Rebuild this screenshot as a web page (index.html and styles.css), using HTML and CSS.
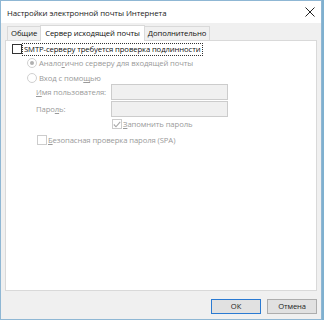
FILE: index.html
```html
<!DOCTYPE html>
<html>
<head>
<meta charset="utf-8">
<link rel="stylesheet" href="styles.css">
</head>
<body>
<div class="window">
  <div class="titlebar">
    <span class="title">Настройки электронной почты Интернета</span>
    <svg class="close" width="10" height="10" viewBox="0 0 10 10"><path d="M0.5 0.5L9.5 9.5M9.5 0.5L0.5 9.5" stroke="#222" stroke-width="1"/></svg>
  </div>
  <div class="body">
    <div class="tabs">
      <div class="tab">Общие</div>
      <div class="tab active">Сервер исходящей почты</div>
      <div class="tab">Дополнительно</div>
    </div>
    <div class="panel">
      <div class="row main-check">
        <span class="box"></span>
        <span class="focus">SMTP-серверу требуется проверка подлинности</span>
      </div>
      <div class="row radio-row dis">
        <span class="radio checked"></span>
        <span>Анало<u>г</u>ично серверу для входящей почты</span>
      </div>
      <div class="row radio-row last dis">
        <span class="radio"></span>
        <span>Вход с помо<u>щ</u>ью</span>
      </div>
      <div class="field dis">
        <span class="flabel"><u>И</u>мя пользователя:</span>
        <span class="input"></span>
      </div>
      <div class="field dis">
        <span class="flabel">Паро<u>л</u>ь:</span>
        <span class="input"></span>
      </div>
      <div class="row remember dis">
        <span class="box small">
          <svg width="8" height="7" viewBox="0 0 8 7"><path d="M0.8 3.5L3 5.8L7.2 0.8" stroke="#a8a8a8" stroke-width="1.1" fill="none"/></svg>
        </span>
        <span><u>З</u>апомнить пароль</span>
      </div>
      <div class="row spa dis">
        <span class="box small"></span>
        <span><u>Б</u>езопасная проверка пароля (SPA)</span>
      </div>
    </div>
    <div class="buttons">
      <div class="btn default">ОК</div>
      <div class="btn">Отмена</div>
    </div>
  </div>
</div>
</body>
</html>
```

FILE: styles.css
```css
html, body {
  margin: 0;
  padding: 0;
}
body {
  width: 324px;
  height: 320px;
  background: #7fb0cf;
  font-family: "Open Sans", "Noto Sans", sans-serif;
  font-size: 7.7px;
  letter-spacing: -0.1px;
  color: #111;
  overflow: hidden;
}
.window {
  width: 320px;
  height: 318px;
  border: 1px solid #8fb7d4;
  background: #f0f0f0;
  display: flex;
  flex-direction: column;
}
.titlebar {
  height: 22px;
  background: #ffffff;
  display: flex;
  align-items: center;
  justify-content: space-between;
  padding: 0 6px 0 6px;
  flex-shrink: 0;
}
.title {
  font-size: 7.9px;
  color: #1a1a1a;
  margin-top: 2px;
}
.close {
  margin-top: -1px;
}
.body {
  flex: 1;
  display: flex;
  flex-direction: column;
  padding: 2px 4px 0 4px;
}
.tabs {
  display: flex;
  align-items: flex-end;
  height: 15px;
  position: relative;
  z-index: 1;
  padding-left: 2px;
}
.tab {
  height: 13px;
  line-height: 13px;
  padding: 0 3px;
  border: 1px solid #d9d9d9;
  border-bottom: none;
  background: #f0f0f0;
  margin-right: -1px;
  color: #111;
}
.tab.active {
  height: 15px;
  line-height: 14px;
  background: #ffffff;
  position: relative;
  z-index: 2;
  padding: 0 4px;
  margin-bottom: -1px;
}
.panel {
  background: #ffffff;
  border: 1px solid #d9d9d9;
  height: 251px;
  padding: 2px 0 0 6px;
  box-sizing: border-box;
}
.row {
  display: flex;
  align-items: center;
  gap: 1px;
  height: 12px;
}
.main-check {
  margin-bottom: 2px;
}
.box {
  width: 10px;
  height: 10px;
  border: 1px solid #333;
  background: #fff;
  box-sizing: border-box;
  flex-shrink: 0;
  display: flex;
  align-items: center;
  justify-content: center;
}
.focus {
  outline: 1px dotted #333;
  outline-offset: 0;
  padding: 0 1px;
  line-height: 11px;
}
.dis {
  color: #9a9a9a;
}
.radio-row {
  padding-left: 15px;
  gap: 2px;
  margin-bottom: 3px;
}
.radio-row.last {
  margin-bottom: 0;
}
.radio {
  width: 10px;
  height: 10px;
  border: 1px solid #d0d0d0;
  border-radius: 50%;
  box-sizing: border-box;
  background: #fff;
  display: flex;
  align-items: center;
  justify-content: center;
}
.radio.checked::after {
  content: "";
  width: 4px;
  height: 4px;
  border-radius: 50%;
  background: #b0b0b0;
}
.field {
  display: flex;
  align-items: center;
  padding-left: 24px;
  height: 16px;
  margin-bottom: 1px;
}
.flabel {
  width: 75px;
  white-space: nowrap;
}
.input {
  width: 117px;
  height: 16px;
  border: 1px solid #cccccc;
  background: #f0f0f0;
  box-sizing: border-box;
}
.remember {
  padding-left: 100px;
  height: 12px;
  margin-bottom: 4px;
}
.box.small {
  border-color: #cccccc;
}
.spa {
  padding-left: 25px;
}
.buttons {
  display: flex;
  justify-content: flex-end;
  gap: 6px;
  padding: 8px 0 0 0;
}
.btn {
  width: 48px;
  height: 13px;
  line-height: 13px;
  text-align: center;
  background: #e1e1e1;
  border: 1px solid #adadad;
  font-size: 7.6px;
  color: #222;
}
.btn.default {
  border: 1px solid #2a7ad2;
}
```
